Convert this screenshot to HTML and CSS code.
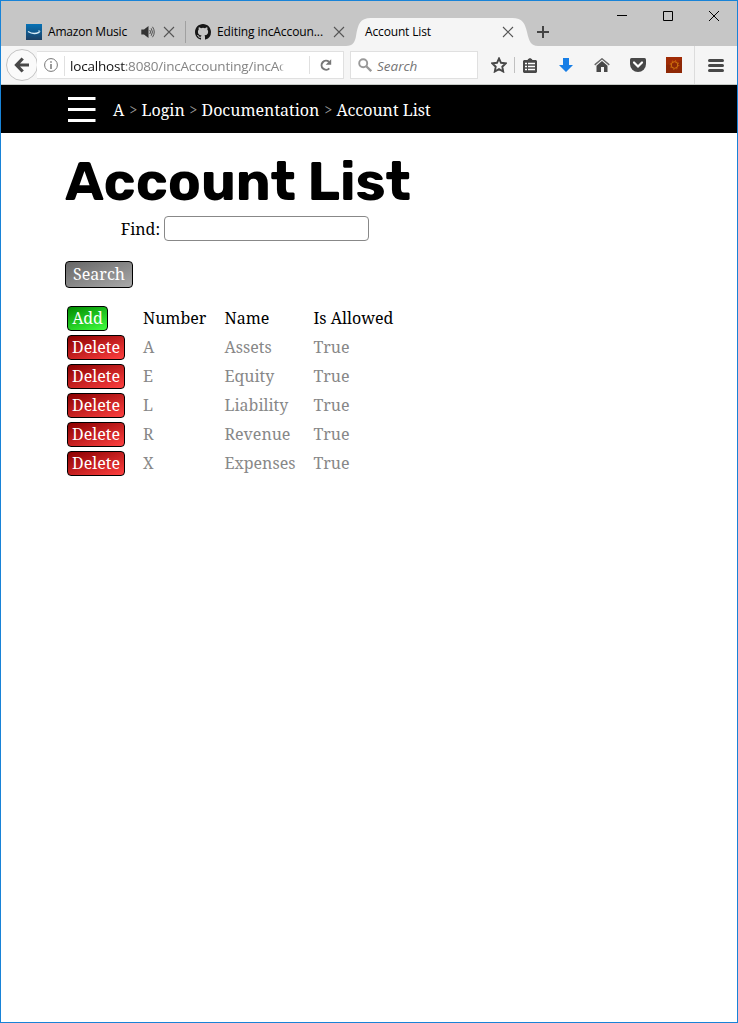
FILE: index.html
```html
<!DOCTYPE html>
<html lang="en">
<head>
<meta charset="utf-8">
<title>Account List</title>
<link rel="stylesheet" href="styles.css">
</head>
<body>
<div class="window">
  <div class="tabstrip">
    <div class="tab tab-music">
      <svg class="favicon" width="16" height="16" viewBox="0 0 16 16"><defs><linearGradient id="az" x2="0" y2="1"><stop offset="0" stop-color="#0672b6"/><stop offset="1" stop-color="#1c3f63"/></linearGradient></defs><rect width="16" height="16" fill="url(#az)"/><path d="M2 7.500q5.500 3.500 11 .8" stroke="#d9edf8" stroke-width="1.300" fill="none"/><path d="M12 7h2l-.7 1.800" stroke="#d9edf8" stroke-width=".8" fill="none"/></svg>
      <span class="tab-title title-music">Amazon Music</span>
      <svg class="sound" width="14" height="14" viewBox="0 0 14 14"><path d="M.3 4.500H3L7.500 1v12L3 9.500H.3z" fill="#333"/><path d="M8.800 5q1.500 2 0 4M10.200 3.300q2.500 3.700 0 7.400M11.500 1.800q3.500 5.200 0 10.400" fill="none" stroke="#444" stroke-width=".9"/></svg>
      <svg class="x" width="12" height="12" viewBox="0 0 12 12"><path d="M1 1l10 10M11 1L1 11"/></svg>
    </div>
    <div class="tab tab-github">
      <svg class="favicon" width="16" height="16" viewBox="0 0 16 16"><path fill="#161616" d="M8 0C3.580 0 0 3.580 0 8c0 3.540 2.290 6.530 5.470 7.590.4.070.55-.17.55-.38 0-.19-.010-.82-.010-1.490-2.010.37-2.530-.49-2.690-.94-.09-.23-.48-.94-.82-1.130-.28-.15-.68-.52-.010-.53.63-.010 1.080.58 1.230.82.72 1.210 1.870.87 2.330.66.070-.52.28-.87.51-1.070-1.780-.2-3.640-.89-3.640-3.950 0-.87.31-1.590.82-2.150-.080-.2-.36-1.020.080-2.120 0 0 .67-.21 2.200.82a7.500 7.500 0 0 1 4 0c1.530-1.040 2.200-.82 2.200-.82.44 1.100.16 1.920.080 2.120.51.56.82 1.270.82 2.150 0 3.070-1.870 3.750-3.650 3.950.29.25.54.73.54 1.480 0 1.070-.010 1.930-.010 2.200 0 .21.15.46.55.38A8 8 0 0 0 16 8c0-4.420-3.580-8-8-8z"/></svg>
      <span class="tab-title title-github">Editing incAccoun...</span>
      <svg class="x" width="12" height="12" viewBox="0 0 12 12"><path d="M1 1l10 10M11 1L1 11"/></svg>
    </div>
    <div class="tab tab-active">
      <svg class="tab-shape" width="192" height="28" viewBox="0 0 192 28"><path fill="#f5f5f5" d="M0 28C7 28 9 24 10 18C12 6 14 0 25 0H166C177 0 179 6 181 14C183 23 185 28 192 28z"/></svg>
      <span class="tab-title title-active">Account List</span>
      <svg class="x" width="12" height="12" viewBox="0 0 12 12"><path d="M1 1l10 10M11 1L1 11"/></svg>
    </div>
    <svg class="plus" width="12" height="12" viewBox="0 0 12 12"><path d="M6 0v12M0 6h12" stroke="#444" stroke-width="2"/></svg>
    <svg class="controls" width="104" height="12" viewBox="0 0 104 12"><path d="M0 5.500h10M46.500 1.500h9v9h-9zM92 1l10 10M102 1L92 11" fill="none" stroke="#000"/></svg>
  </div>

  <div class="toolbar">
    <div class="back"><svg width="16" height="16" viewBox="0 0 16 16"><path d="M8.700 1.500L2.500 8l6.200 6.500M3 8h12" fill="none" stroke="#484848" stroke-width="3.200"/></svg></div>
    <div class="urlbar">
      <svg class="info" width="14" height="14" viewBox="0 0 14 14"><circle cx="7" cy="7" r="6.400" fill="none" stroke="#777"/><path d="M7 6v5M7 3.200v1.600" stroke="#777" stroke-width="1.500"/></svg>
      <div class="url"><span class="host">localhost</span>:8080/incAccounting/incAc</div>
      <div class="go"><svg width="12" height="12" viewBox="0 0 12 12"><path d="M9.300 9.400A4.500 4.500 0 1 1 9 2.800" fill="none" stroke="#777" stroke-width="2"/><path d="M11.200.2v5.500H5.700z" fill="#777"/></svg></div>
    </div>
    <div class="searchbar">
      <svg width="14" height="14" viewBox="0 0 14 14"><circle cx="5.200" cy="5.200" r="4" fill="none" stroke="#999" stroke-width="1.900"/><path d="M8.300 8.300l4.900 4.900" stroke="#999" stroke-width="2.300"/></svg>
      <span class="search-hint">Search</span>
    </div>
    <svg class="star" width="16" height="16" viewBox="0 0 16 16"><path d="M8 1.500l2 4.300 4.700.6-3.400 3.300.9 4.800L8 12.100l-4.200 2.400.9-4.800L1.300 6.400 6 5.800z" fill="none" stroke="#484848" stroke-width="1.900"/></svg>
    <i class="divider"></i>
    <svg class="list" width="14" height="15" viewBox="0 0 14 15"><path d="M1 2h3.800V1.300L7 0l2.200 1.300V2H13l1 1v11l-1 1H1l-1-1V3z" fill="#484848"/><path d="M2 5.500h2M5 5.500H12M2 8.500h2M5 8.500H12M2 11.500h2M5 11.500H12" stroke="#fff" stroke-width="1.600"/></svg>
    <svg class="download" width="14" height="14" viewBox="0 0 14 14"><path d="M4 0h6v7h4l-7 7-7-7h4z" fill="#177ee6"/></svg>
    <svg class="home" width="16" height="14" viewBox="0 0 16 14"><path d="M.7 6.900L8 .8l7.300 6.100" fill="none" stroke="#666" stroke-width="1.400"/><path d="M2.500 7.800L8 3.100l5.500 4.700V14H10V9H7v5H2.500z" fill="#484848"/></svg>
    <svg class="pocket" width="16" height="14" viewBox="0 0 16 14"><path d="M1.500 0h13Q16 0 16 1.500V6A8 8 0 0 1 0 6V1.500Q0 0 1.500 0z" fill="#484848"/><path d="M4 4.500l4 4 4-4" fill="none" stroke="#fff" stroke-width="2.200" stroke-linecap="round"/></svg>
    <svg class="addon" width="16" height="16" viewBox="0 0 16 16"><path d="M0 0h16v16H0z" fill="#a02b05"/><path d="M0 8q8-1 16-5v13H0z" fill="#8e2806"/><circle cx="8.500" cy="8" r="3.300" fill="none" stroke="#d4770d" stroke-width="1"/><circle cx="8.500" cy="8" r="4.300" fill="none" stroke="#d4770d" stroke-width="1" stroke-dasharray="1.200 2.180"/></svg>
    <div class="menu"><svg width="16" height="13" viewBox="0 0 16 13"><path d="M1.500 1.500h13M1.500 6.500h13M1.500 11.500h13" stroke="#484848" stroke-width="3" stroke-linecap="round"/></svg></div>
  </div>

  <header class="site-nav">
    <svg width="28" height="28" viewBox="0 0 28 28"><path d="M0 3.500h27.500M0 14.500h27.500M0 25.500h27.500" stroke="#fff" stroke-width="3"/></svg>
    <nav class="crumbs"><span class="c-a">A</span><i>&gt;</i><span class="c-login">Login</span><i>&gt;</i><span class="c-doc">Documentation</span><i>&gt;</i><span class="c-list">Account List</span></nav>
  </header>

  <main class="content">
    <h1>Account List</h1>
    <div class="find"><label for="find">Find:</label><input id="find" type="text"></div>
    <button class="btn search">Search</button>
    <div class="accounts">
      <div><button class="btn add">Add</button></div><b>Number</b><b>Name</b><b>Is Allowed</b>
      <div><button class="btn delete">Delete</button></div><span>A</span><span>Assets</span><span>True</span>
      <div><button class="btn delete">Delete</button></div><span>E</span><span>Equity</span><span>True</span>
      <div><button class="btn delete">Delete</button></div><span>L</span><span>Liability</span><span>True</span>
      <div><button class="btn delete">Delete</button></div><span>R</span><span>Revenue</span><span>True</span>
      <div><button class="btn delete">Delete</button></div><span>X</span><span>Expenses</span><span>True</span>
    </div>
  </main>
</div>
</body>
</html>
```
FILE: styles.css
```css
* { box-sizing: border-box; }
body { margin: 0; background: #fff; }
svg { display: block; flex: none; }
.window { height: 1023px; border: 1px solid #1883d7; overflow: hidden; font: 16px/22px "Noto Serif", "Droid Serif", "DejaVu Serif Condensed", "DejaVu Serif", serif; }

.tabstrip { display: flex; height: 45px; background: #c6c6c6; padding: 17px 0 0 25px; font: 12px/28px "Open Sans", "Noto Sans", sans-serif; letter-spacing: -0.15px; color: #000; }
.tab { display: flex; align-items: center; height: 28px; white-space: nowrap; }
.title-music { width: 93px; margin-left: 6px; letter-spacing: -0.2px; }
.title-github { width: 116px; margin-left: 6px; letter-spacing: -0.1px; }
.title-active { width: 137px; margin-left: 19px; position: relative; }
.tab-music { width: 160px; }
.tab-music::after { content: ""; width: 1px; height: 22px; background: #a0a0a0; margin-left: 10px; flex: none; }
.sound { margin-right: 8px; }
.x { position: relative; }
.x path { stroke: #555; stroke-width: 1.1; fill: none; }
.tab-github { width: 160px; margin-left: 9px; }
.tab-active { width: 192px; margin-left: -9px; position: relative; }
.tab-shape { position: absolute; left: 0; top: 0; }
.plus { margin: 8px 0 0 -1px; }
.controls { margin: -8px 16px 0 auto; }

.toolbar { display: flex; align-items: center; height: 39px; background: #f5f5f5; border-bottom: 1px solid #c5c9c5; padding-left: 5px; font-family: "Open Sans", "Noto Sans", sans-serif; }
.back { width: 32px; height: 32px; border: 1px solid #c4c4c4; border-radius: 50%; background: #fafafa; display: grid; place-items: center; flex: none; }
.urlbar { display: flex; align-items: center; width: 307px; height: 28px; margin-left: -1px; border: 1px solid #e0e0e0; border-left: 0; background: #fff; flex: none; }
.info { margin-left: 7px; }
.url { flex: none; width: 230px; margin: 2px 0 0 6px; padding-left: 5px; border-left: 1px solid #e0e0e0; white-space: nowrap; font-size: 13.5px; line-height: 20px; letter-spacing: -0.2px; color: #858585; -webkit-mask-image: linear-gradient(90deg, #000 216px, transparent 220px); mask-image: linear-gradient(90deg, #000 216px, transparent 220px); }
.host { color: #111; }
.go { margin-left: 15px; height: 18px; border-left: 1px solid #e0e0e0; padding: 3px 0 0 10px; flex: none; }
.searchbar { display: flex; align-items: center; width: 128px; height: 28px; margin-left: 6px; padding-left: 7px; border: 1px solid #e0e0e0; background: #fff; flex: none; }
.search-hint { margin: 2px 0 0 5px; font: italic 13.5px/18px "Open Sans", sans-serif; color: #757575; }
.star { margin-left: 13px; }
.divider { width: 1px; height: 16px; background: #c0c0c0; margin-left: 7px; }
.list { margin-left: 8px; }
.download { margin-left: 22px; }
.home { margin-left: 21px; }
.pocket { margin-left: 20px; }
.addon { margin-left: 20px; }
.menu { margin-left: 12px; padding-left: 13px; height: 38px; display: flex; align-items: center; border-left: 1px solid #dcdcdc; }

.site-nav { height: 48px; background: #000; display: flex; align-items: center; padding-left: 67px; color: #fff; }
.crumbs { display: flex; margin: 1px 0 0 17px; white-space: nowrap; }
.crumbs span { flex: none; }
.crumbs i { width: 16px; text-align: center; font-style: normal; font-size: 14px; color: #999; flex: none; }
.c-a { width: 12.5px; }
.c-login { width: 44px; }
.c-doc { width: 119px; }

.content { padding: 21px 0 0 64px; }
h1 { margin: 0; font: 700 54.4px/55px "Rubik", "Inter", sans-serif; white-space: nowrap; }
.find { display: flex; align-items: center; margin: 6px 0 20px; height: 26px; }
.find label { width: 95px; text-align: right; margin: 2px 4px 0 0; white-space: nowrap; }
.find input { width: 205px; height: 25px; border: 1px solid #888; border-radius: 4px; background: #fff; }
.btn { display: block; margin: 0; padding: 0 0 1px; border: 1px solid #000; border-radius: 4px; color: #fff; font: inherit; line-height: 22px; height: 25px; text-align: center; white-space: nowrap; }
.search { width: 68px; height: 27px; padding-bottom: 0; line-height: 23px; background: linear-gradient(160deg, #666, #aaa); }
.add { width: 41px; background: linear-gradient(160deg, #008a00, #40ff40); }
.delete { width: 58px; background: linear-gradient(160deg, #8a0000, #ff4040); }
.accounts { display: grid; grid-template-columns: 76px 81.5px 89px 90px; grid-auto-rows: 25px; row-gap: 4px; margin: 18px 0 0 2px; color: #888; white-space: nowrap; line-height: 25px; }
.accounts b { font-weight: normal; color: #000; }
```
